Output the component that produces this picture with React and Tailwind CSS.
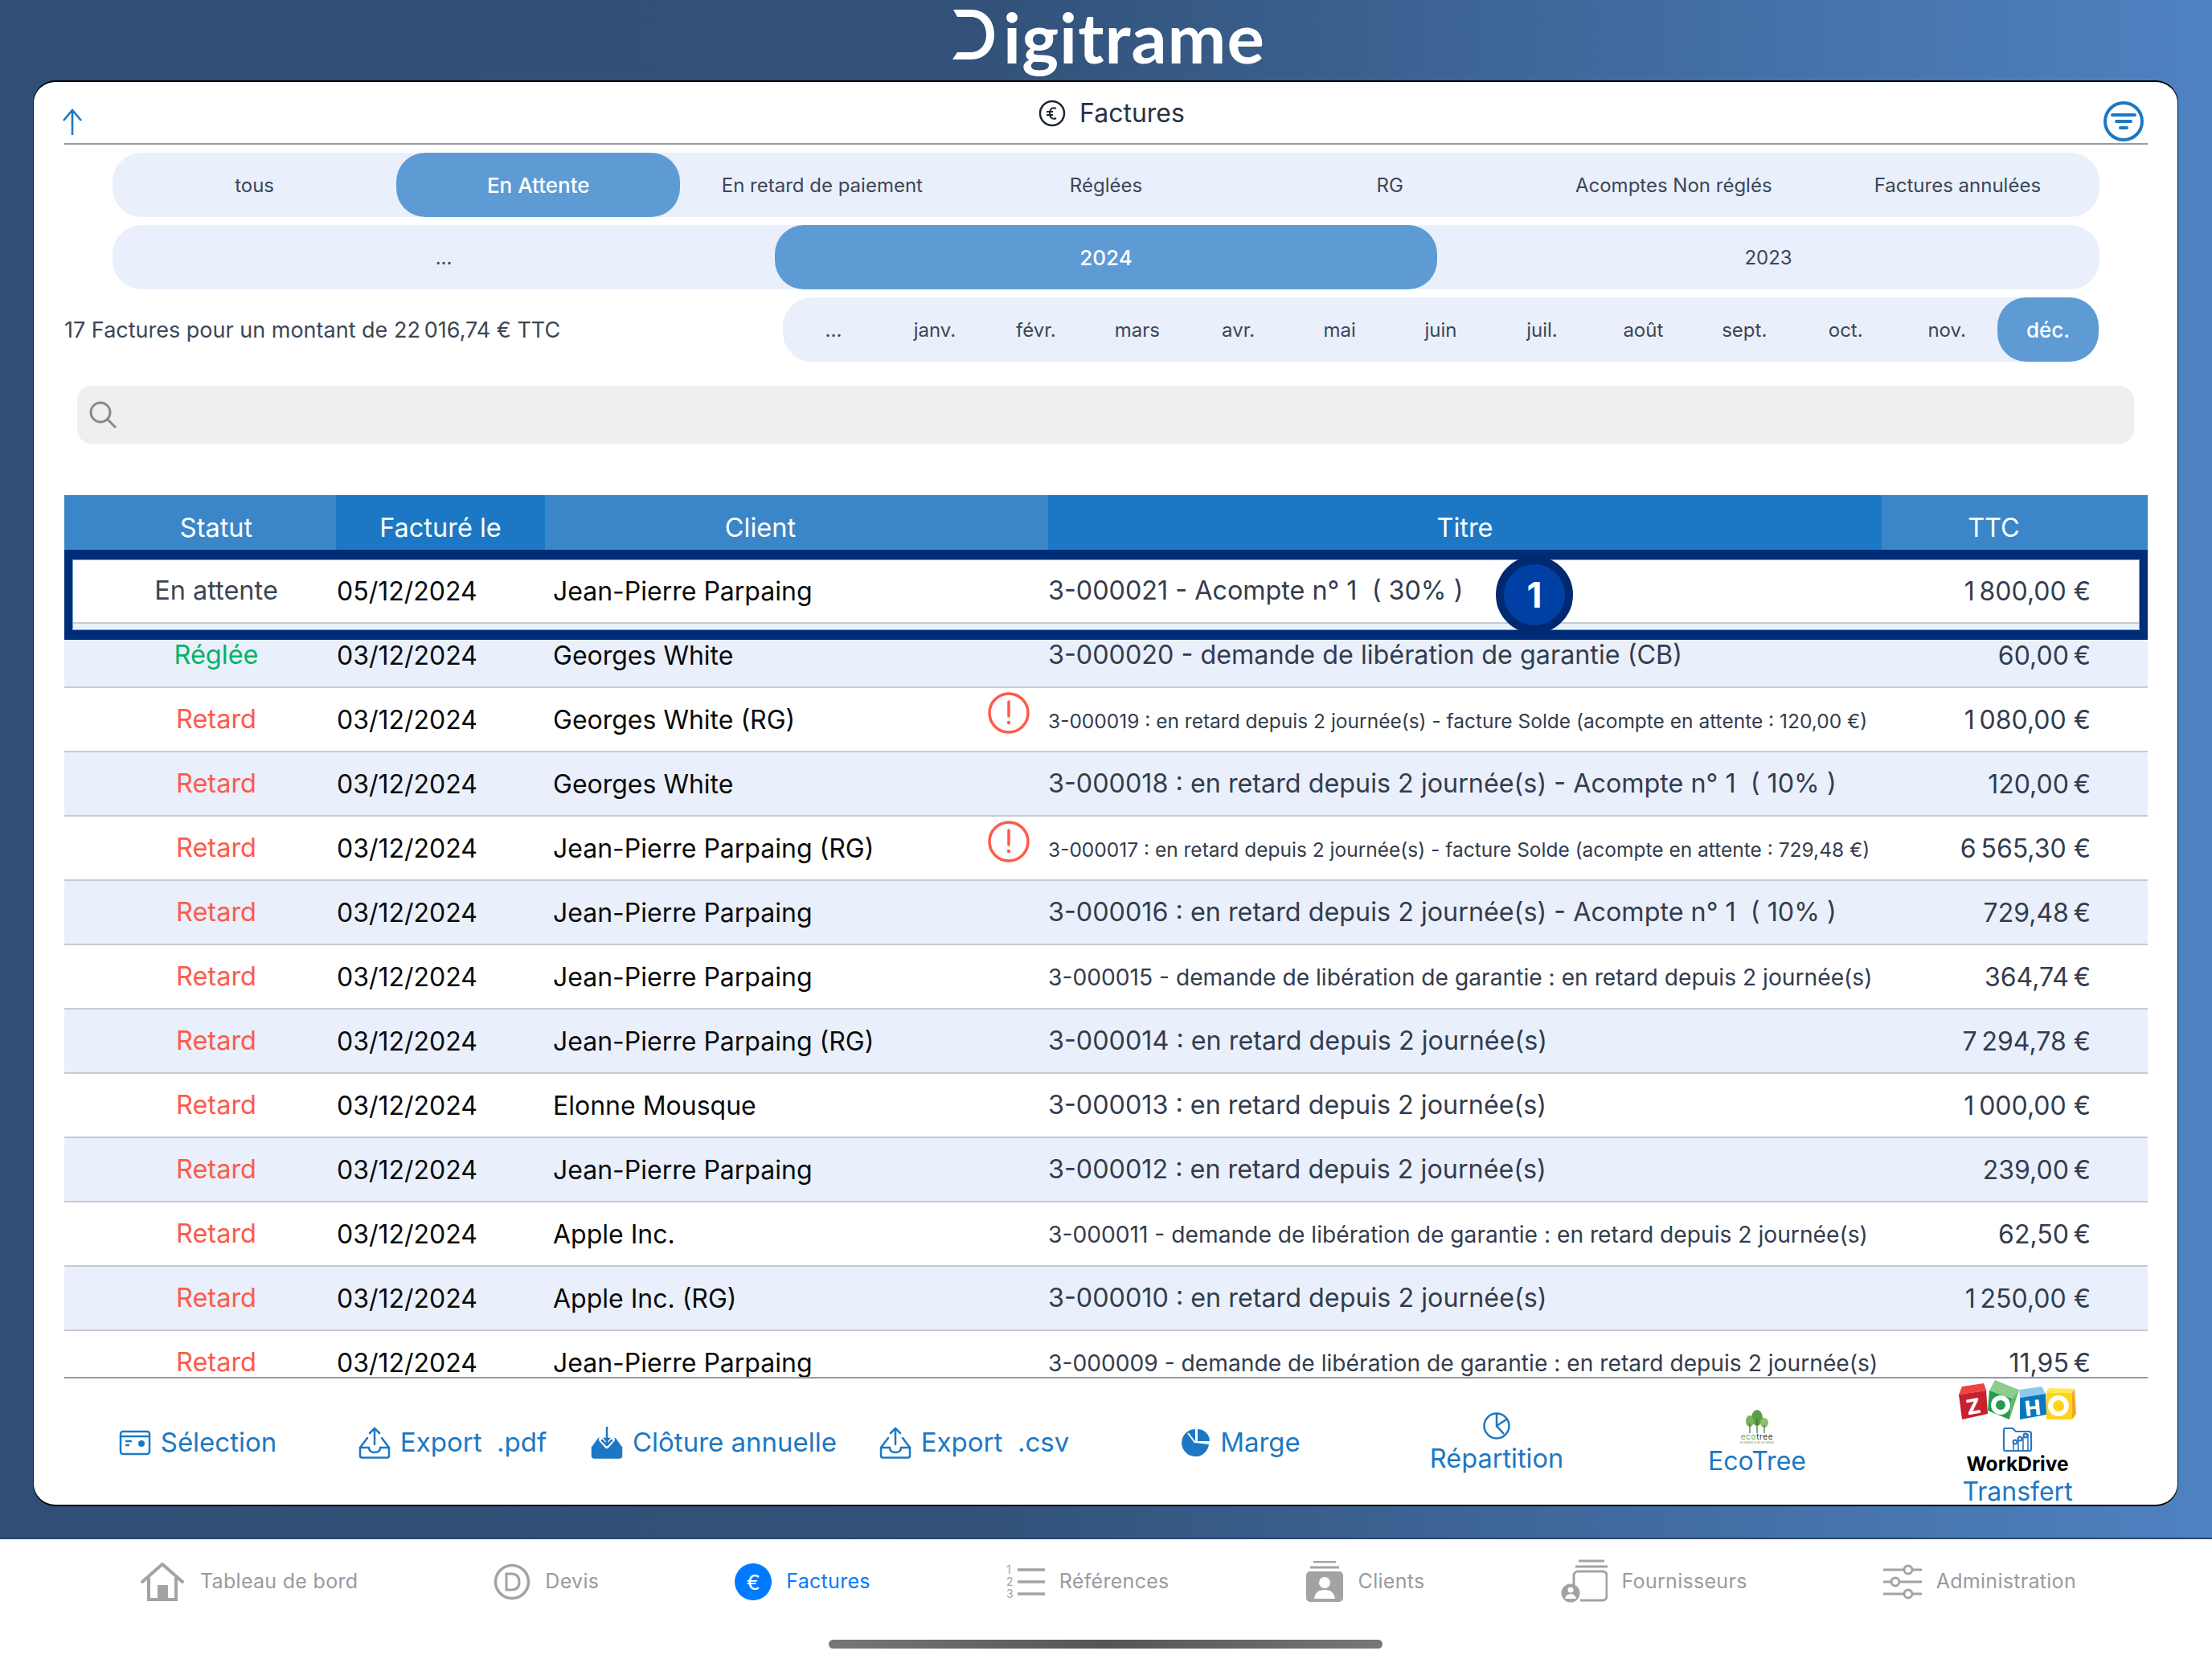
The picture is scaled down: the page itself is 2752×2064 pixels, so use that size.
const FONT = "font-['Inter','Noto_Sans',sans-serif]";

const statuts = { a: ['En attente', 'text-[#3c4656]'], r: ['Retard', 'text-[#ff5a4a]'], g: ['Réglée', 'text-[#00b368]'] };

const BIG = 'text-[32.3px]';
const SMALL = 'text-[24.5px] pt-[4px]';
const MID = 'text-[28.2px] pt-[1px]';

const rows = [
  ['a', '05/12/2024', 'Jean-Pierre Parpaing', '3-000021 - Acompte n° 1  ( 30% )', '1 800,00 €', BIG, false],
  ['g', '03/12/2024', 'Georges White', '3-000020 - demande de libération de garantie (CB)', '60,00 €', BIG, false],
  ['r', '03/12/2024', 'Georges White (RG)', '3-000019 : en retard depuis 2 journée(s) - facture Solde (acompte en attente : 120,00 €)', '1 080,00 €', SMALL, true],
  ['r', '03/12/2024', 'Georges White', '3-000018 : en retard depuis 2 journée(s) - Acompte n° 1  ( 10% )', '120,00 €', BIG, false],
  ['r', '03/12/2024', 'Jean-Pierre Parpaing (RG)', '3-000017 : en retard depuis 2 journée(s) - facture Solde (acompte en attente : 729,48 €)', '6 565,30 €', SMALL, true],
  ['r', '03/12/2024', 'Jean-Pierre Parpaing', '3-000016 : en retard depuis 2 journée(s) - Acompte n° 1  ( 10% )', '729,48 €', BIG, false],
  ['r', '03/12/2024', 'Jean-Pierre Parpaing', '3-000015 - demande de libération de garantie : en retard depuis 2 journée(s)', '364,74 €', MID, false],
  ['r', '03/12/2024', 'Jean-Pierre Parpaing (RG)', '3-000014 : en retard depuis 2 journée(s)', '7 294,78 €', BIG, false],
  ['r', '03/12/2024', 'Elonne Mousque', '3-000013 : en retard depuis 2 journée(s)', '1 000,00 €', BIG, false],
  ['r', '03/12/2024', 'Jean-Pierre Parpaing', '3-000012 : en retard depuis 2 journée(s)', '239,00 €', BIG, false],
  ['r', '03/12/2024', 'Apple Inc.', '3-000011 - demande de libération de garantie : en retard depuis 2 journée(s)', '62,50 €', MID, false],
  ['r', '03/12/2024', 'Apple Inc. (RG)', '3-000010 : en retard depuis 2 journée(s)', '1 250,00 €', BIG, false],
  ['r', '03/12/2024', 'Jean-Pierre Parpaing', '3-000009 - demande de libération de garantie : en retard depuis 2 journée(s)', '11,95 €', MID, false],
];

function Seg({ items, active, cols }) {
  return (
    <div className={`grid ${cols} h-[80px] bg-[#e9f0fb] rounded-[36px]`}>
      {items.map((t, i) => (
        <div key={t} className={`flex items-center justify-center rounded-[36px] ${i === active ? 'bg-[#5e9bd4] text-white font-medium text-[26px]' : 'text-[#3c4656] text-[24px] pt-[2px]'}`}>{t}</div>
      ))}
    </div>
  );
}

const Up = () => (
  <svg width="40" height="40" viewBox="0 0 40 40" fill="none" stroke="#1c78c4" strokeWidth="2.5" strokeLinecap="round" strokeLinejoin="round">
    <path d="M20 2v20M14 8l6-6 6 6" />
    <path d="M11 14l-9 12v10a2.5 2.5 0 0 0 2.5 2.5h31A2.5 2.5 0 0 0 38 36V26l-9-12" />
    <path d="M2 26h11c0 4 3 6 7 6s7-2 7-6h11" />
  </svg>
);

const Down = () => (
  <svg width="40" height="40" viewBox="0 0 40 40" fill="none" stroke="#1c78c4" strokeWidth="2.5" strokeLinecap="round" strokeLinejoin="round">
    <path d="M10 15L2 26v10a2.5 2.5 0 0 0 2.5 2.5h31A2.5 2.5 0 0 0 38 36V26l-8-11z" fill="#1c78c4" />
    <path d="M13 16l7 8 7-8" stroke="#fff" strokeWidth="6" />
    <path d="M20 1v22M14 17l6 6 6-6" />
  </svg>
);

const TB = ({ icon, children, extra = '' }) => (
  <div className={`flex items-center justify-center gap-[12px] text-[#1c78c4] text-[33px] whitespace-pre ${extra}`}>
    {icon}
    <span>{children}</span>
  </div>
);

function Zoho() {
  const L = ({ x, y, c, r, s = 26 }) => <text x={x} y={y} fill="#fff" fontSize={s} fontWeight="800" textAnchor="middle" transform={`rotate(${r} ${x} ${y - 10})`} fontFamily="Inter, sans-serif">{c}</text>;
  return (
    <svg width="146" height="50" viewBox="0 0 146 50">
      <polygon points="0,18 4,8 31,4 34,13" fill="#ef4444" />
      <polygon points="0,18 34,13 36,42 4,49" fill="#c8202f" />
      <polygon points="31,4 34,13 36,42 34,12" fill="#8e1522" />
      <L x={18} y={42} c="Z" r={-10} />
      <polygon points="38,13 45,0 75,12 66,23" fill="#8ecb8e" />
      <polygon points="38,13 66,23 63,49 36,38" fill="#1e9e4e" />
      <polygon points="66,23 75,12 63,49" fill="#66b866" />
      <circle cx="52" cy="31" r="12" fill="#fff" /><circle cx="52" cy="31" r="6" fill="#1e9e4e" />
      <polygon points="75,12 103,8 108,17 76,22" fill="#8dc8ee" />
      <polygon points="76,22 108,17 109,43 76,49" fill="#0a77bd" />
      <L x={92} y={44} c="H" r={-6} />
      <polygon points="109,13 113,10 144,11 141,16 109,16" fill="#ffe94d" />
      <rect x="109" y="16" width="32" height="33" fill="#fdd41a" />
      <polygon points="141,16 144,11 146,42 141,49" fill="#f4a521" />
      <circle cx="124" cy="32" r="13" fill="#fff" /><circle cx="124" cy="32" r="7" fill="#fdd41a" />
    </svg>
  );
}

function Nav({ icon, label, active }) {
  return (
    <div className={`flex items-center gap-[18px] text-[25px] tracking-[0.3px] ${active ? 'text-[#007aff]' : 'text-[#9a9a9f]'}`}>
      {icon}
      <span>{label}</span>
    </div>
  );
}

export default function App() {
  return (
    <div className={`w-[2752px] h-[2064px] overflow-hidden flex flex-col ${FONT} bg-[linear-gradient(90deg,#2f4f76_0%,#32527a_45%,#4f82c2_100%)]`}>
      {/* Logo */}
      <div className="h-[100px] flex justify-center items-start shrink-0 ml-[6px]">
        <div className="flex items-start">
          <svg width="54" height="62" viewBox="0 0 52 62" className="mt-[12px] mr-[10px]">
            <path d="M1 0h22c17 0 29 13 29 31S40 62 23 62H0l6-9h17c11 0 19-9 19-22S34 9 23 9H6z" fill="#fff" />
          </svg>
          <span className="text-white font-['Lato',sans-serif] font-bold text-[87px] leading-[76px] mt-[8px] tracking-[1px]">igitrame</span>
        </div>
      </div>

      {/* Card */}
      <div className="ml-[41px] w-[2669px] h-[1774px] shrink-0 bg-white rounded-[28px] border border-[#0a1526] border-y-2 border-y-black pl-[38px] pr-[37px] flex flex-col overflow-hidden">
        <div className="h-[78px] shrink-0 border-b-2 border-[#9a9a9e] flex justify-between">
          <svg width="26" height="33" viewBox="0 0 26 33" className="ml-[-3px] mt-[33px]" fill="none" stroke="#1c78c4" strokeWidth="2.6">
            <path d="M13 2v31M2 15L13 2l11 13" />
          </svg>
          <div className="flex items-center gap-[17px] h-[78px] ml-[46px] text-[#2a3342] text-[32px]">
            <svg width="34" height="34" viewBox="0 0 34 34" fill="none" stroke="#1c2433" strokeWidth="2.5">
              <circle cx="17" cy="17" r="15" />
              <path d="M22 11c-4-2-8 0-8 6s4 8 8 6M10 15h8M10 19h8" strokeWidth="2" />
            </svg>
            <span>Factures</span>
          </div>
          <svg width="50" height="50" viewBox="0 0 50 50" className="mt-[24px] mr-[5px]" fill="none" stroke="#1c78c4" strokeWidth="4" strokeLinecap="round">
            <circle cx="25" cy="25" r="23" />
            <path d="M11 17h28M16 25h18M21 33h8" />
          </svg>
        </div>

        <div className="mt-[10px] mx-[60px] flex flex-col gap-[10px] shrink-0">
          <Seg cols="grid-cols-7" active={1} items={['tous', 'En Attente', 'En retard de paiement', 'Réglées', 'RG', 'Acomptes Non réglés', 'Factures annulées']} />
          <Seg cols="grid-cols-3" active={1} items={['...', '2024', '2023']} />
        </div>

        <div className="mt-[10px] flex items-center justify-between shrink-0 h-[80px] pr-[61px]">
          <span className="text-[27px] text-[#3c4656] whitespace-pre pt-[2px]">17 Factures pour un montant de 22{'\u202f'}016,74 € TTC</span>
          <div className="w-[1637px]">
            <Seg cols="grid-cols-13" active={12} items={['...', 'janv.', 'févr.', 'mars', 'avr.', 'mai', 'juin', 'juil.', 'août', 'sept.', 'oct.', 'nov.', 'déc.']} />
          </div>
        </div>

        <div className="mt-[30px] ml-[16px] mr-[17px] h-[72px] shrink-0 bg-[#efefef] rounded-[18px] flex items-center pl-[14px]">
          <svg width="36" height="36" viewBox="0 0 36 36" fill="none" stroke="#8a8a8a" strokeWidth="3">
            <circle cx="15" cy="15" r="12" /><path d="M24 24l10 10" />
          </svg>
        </div>

        {/* Table */}
        <div className="mt-[64px] shrink-0">
          <div className="grid grid-cols-[338px_260px_626px_1037px_331px] h-[68px] text-white text-[32.5px]">
            <div className="bg-[#3a86c8] flex items-center justify-center pl-[40px] pt-[14px]">Statut</div>
            <div className="bg-[#1c78c4] flex items-center justify-center pt-[14px]">Facturé le</div>
            <div className="bg-[#3a86c8] flex items-center justify-center pr-[90px] pt-[14px]">Client</div>
            <div className="bg-[#1c78c4] flex items-center justify-center pt-[14px]">Titre</div>
            <div className="bg-[#3a86c8] flex items-center justify-center pr-[52px] pt-[14px]">TTC</div>
          </div>
          <div className="relative h-[1031px] border-b-2 border-[#8f9aa5]">
            <div className="h-[1029px] overflow-hidden pt-[12px]">
              {rows.map((r, i) => (
                <div key={r[3]} className={`grid grid-cols-[338px_260px_626px_1037px_331px] h-[80px] border-b-2 border-[#c6cad3] text-[32px] items-center pt-[1px] ${i % 2 ? 'bg-[#e9f0fb]' : 'bg-white'}`}>
                  <div className={`text-center pl-[40px] text-[32.5px] ${statuts[r[0]][1]}`}>{statuts[r[0]][0]}</div>
                  <div className="text-[#0a0a0a] pl-[1px]">{r[1]}</div>
                  <div className="relative text-[#0a0a0a] pl-[10px] h-full flex items-center">
                    {r[2]}
                    {r[6] && (
                      <svg width="52" height="52" viewBox="0 0 52 52" className="absolute right-[23px] top-[4px]" fill="none" stroke="#ff5a4a" strokeWidth="3.5">
                        <circle cx="26" cy="26" r="24" />
                        <path d="M26 12v18" strokeWidth="3.5" strokeLinecap="round" />
                        <circle cx="26" cy="38" r="2.2" fill="#ff5a4a" stroke="none" />
                      </svg>
                    )}
                  </div>
                  <div className={`${r[5]} text-[#333c4d] whitespace-pre`}>{r[3]}</div>
                  <div className="text-right pr-[71px] text-[#333c4d] whitespace-pre">{r[4].replace(' ', '\u202f')}</div>
                </div>
              ))}
            </div>
            {/* Annotation */}
            <div className="absolute left-0 right-0 top-0 h-[112px] border-x-[10px] border-y-[12px] border-[#002d78] shadow-[inset_0_0_0_1px_#7fa3d0]" />
            <div className="absolute left-[1781px] top-[8px] w-[96px] h-[96px] rounded-full bg-[#0040a5] border-[10px] border-[#00296f] text-white font-bold text-[44px] flex items-center justify-center">1</div>
          </div>
        </div>

        {/* Toolbar */}
        <div className="flex-1 grid grid-cols-8 items-center min-h-0 pb-[6px]">
          <TB extra="pl-[8px]" icon={
            <svg width="40" height="32" viewBox="0 0 40 32" fill="none" stroke="#1c78c4" strokeWidth="2.5">
              <rect x="2" y="2" width="36" height="28" rx="3" />
              <path d="M2 8h36" /><path d="M8 14h8M8 19h5" strokeWidth="2.5" />
              <circle cx="28" cy="17" r="4" fill="#1c78c4" stroke="none" />
            </svg>
          }>Sélection</TB>
          <TB extra="pr-[6px]" icon={<Up />}>Export  .pdf</TB>
          <TB extra="pr-[4px]" icon={<Down />}>Clôture annuelle</TB>
          <TB extra="pr-[4px]" icon={<Up />}>Export  .csv</TB>
          <TB extra="pl-[12px]" icon={
            <svg width="36" height="36" viewBox="0 0 36 36">
              <path d="M17 1A17 17 0 1 0 34 20L17 18z" fill="#1c78c4" />
              <path d="M20 1a15 15 0 0 1 15 15H20z" fill="#1c78c4" />
              <path d="M17 18L8 6" stroke="#fff" strokeWidth="2" />
            </svg>
          }>Marge</TB>
          <div className="flex flex-col items-center text-[#1c78c4] text-[32.5px] leading-[42px] gap-[2px] pt-[2px]">
            <svg width="36" height="36" viewBox="0 0 36 36" fill="none" stroke="#1c78c4" strokeWidth="2.5">
              <circle cx="18" cy="18" r="15.5" /><path d="M18 3v15l12-8M18 18l9 10" />
            </svg>
            <span>Répartition</span>
          </div>
          <div className="flex flex-col items-center text-[#1c78c4] text-[32px] leading-[42px] pt-[2px]">
            <svg width="50" height="44" viewBox="0 0 50 44">
              <ellipse cx="25" cy="11" rx="7" ry="10" fill="#5c9e46" />
              <ellipse cx="16" cy="15" rx="5" ry="7" fill="#78b45c" />
              <ellipse cx="34" cy="17" rx="5" ry="6" fill="#8cc06a" />
              <path d="M25 12v18M16 18v12M34 20v10" stroke="#3f6d32" strokeWidth="1.2" />
              <text x="25" y="38" fontSize="10" textAnchor="middle" fontFamily="Inter, sans-serif" letterSpacing="0.6"><tspan fill="#6da74d">eco</tspan><tspan fill="#2c3b2c">tree</tspan></text>
              <text x="25" y="43" fontSize="4" textAnchor="middle" fill="#6da74d" fontFamily="Inter, sans-serif">la nature a de la valeur</text>
            </svg>
            <span>EcoTree</span>
          </div>
          <div className="flex flex-col items-center pt-[2px]">
            <Zoho />
            <svg width="38" height="30" viewBox="0 0 38 30" className="mt-[9px]" fill="none" stroke="#2a78c2" strokeWidth="2.2">
              <path d="M2 27V3a2 2 0 0 1 2-2h9l4 4h16a3 3 0 0 1 3 3v19a2 2 0 0 1-2 2H4a2 2 0 0 1-2-2z" />
              <path d="M14 28v-8M20 28V16M26 28V12M32 28V8" strokeWidth="1.6" />
              <circle cx="16" cy="18" r="2.4" /><circle cx="22" cy="14" r="2.4" /><circle cx="29" cy="10" r="2.4" />
            </svg>
            <span className="text-black font-bold text-[24.5px] leading-[30px]">WorkDrive</span>
            <span className="text-[#1c78c4] text-[32px] leading-[38px] mt-[1px]">Transfert</span>
          </div>
        </div>
      </div>

      {/* Bottom nav */}
      <div className="mt-[39px] flex-1 bg-white border-t-2 border-[#29456b] relative">
        <div className="h-[106px] flex justify-evenly items-center pl-[6px]">
          <Nav label="Tableau de bord" icon={
            <svg width="56" height="50" viewBox="0 0 56 50" fill="none" stroke="#a3a3a3" strokeWidth="4">
              <path d="M2 25L27 3l25 22" strokeLinejoin="round" strokeLinecap="round" />
              <path d="M10 20v27h34V20" />
              <rect x="21" y="29" width="13" height="18" fill="#a3a3a3" stroke="none" />
            </svg>
          } />
          <Nav label="Devis" icon={
            <svg width="46" height="46" viewBox="0 0 46 46" fill="none" stroke="#a3a3a3" strokeWidth="3.5">
              <circle cx="23" cy="23" r="20.5" />
              <path d="M16 13v20h6c7 0 10-4 10-10s-3-10-10-10z" strokeWidth="3" />
            </svg>
          } />
          <Nav active label="Factures" icon={
            <div className="w-[46px] h-[46px] rounded-full bg-[#007aff] text-white text-[26px] flex items-center justify-center">€</div>
          } />
          <Nav label="Références" icon={
            <svg width="48" height="46" viewBox="0 0 48 46">
              <text x="0" y="13" fontSize="14" fill="#a3a3a3" fontFamily="Inter, sans-serif">1</text>
              <text x="0" y="28" fontSize="14" fill="#a3a3a3" fontFamily="Inter, sans-serif">2</text>
              <text x="0" y="43" fontSize="14" fill="#a3a3a3" fontFamily="Inter, sans-serif">3</text>
              <path d="M14 8h34M14 23h34M14 38h34" stroke="#a3a3a3" strokeWidth="3.5" />
            </svg>
          } />
          <Nav label="Clients" icon={
            <svg width="48" height="52" viewBox="0 0 48 52">
              <path d="M10 1h28M6 8h36" stroke="#a3a3a3" strokeWidth="3" />
              <rect x="1" y="13" width="46" height="38" rx="5" fill="#a3a3a3" />
              <ellipse cx="24" cy="27" rx="7" ry="7" fill="#fff" />
              <path d="M11 47c1-8 6-11 13-11s12 3 13 11z" fill="#fff" />
            </svg>
          } />
          <Nav label="Fournisseurs" icon={
            <svg width="58" height="56" viewBox="0 0 58 56" fill="none" stroke="#a3a3a3" strokeWidth="3">
              <path d="M22 2h32M18 9h40" />
              <path d="M16 42V20a5 5 0 0 1 5-5h31a5 5 0 0 1 5 5v26a5 5 0 0 1-5 5H24" />
              <circle cx="12" cy="42" r="10" fill="#a3a3a3" stroke="#a3a3a3" />
              <circle cx="12" cy="38" r="3.5" fill="#fff" stroke="none" />
              <path d="M5 49c1-4 4-6 7-6s6 2 7 6z" fill="#fff" stroke="none" />
            </svg>
          } />
          <Nav label="Administration" icon={
            <svg width="48" height="44" viewBox="0 0 48 44" fill="none" stroke="#a3a3a3" strokeWidth="3">
              <path d="M0 7h26M36 7h12M0 22h10M20 22h28M0 37h26M36 37h12" />
              <circle cx="31" cy="7" r="5" /><circle cx="15" cy="22" r="5" /><circle cx="31" cy="37" r="5" />
            </svg>
          } />
        </div>
        <div className="absolute left-[1031px] top-[125px] w-[689px] h-[11px] rounded-full bg-[linear-gradient(90deg,#777,#555_50%,#777)]" />
      </div>
    </div>
  );
}
